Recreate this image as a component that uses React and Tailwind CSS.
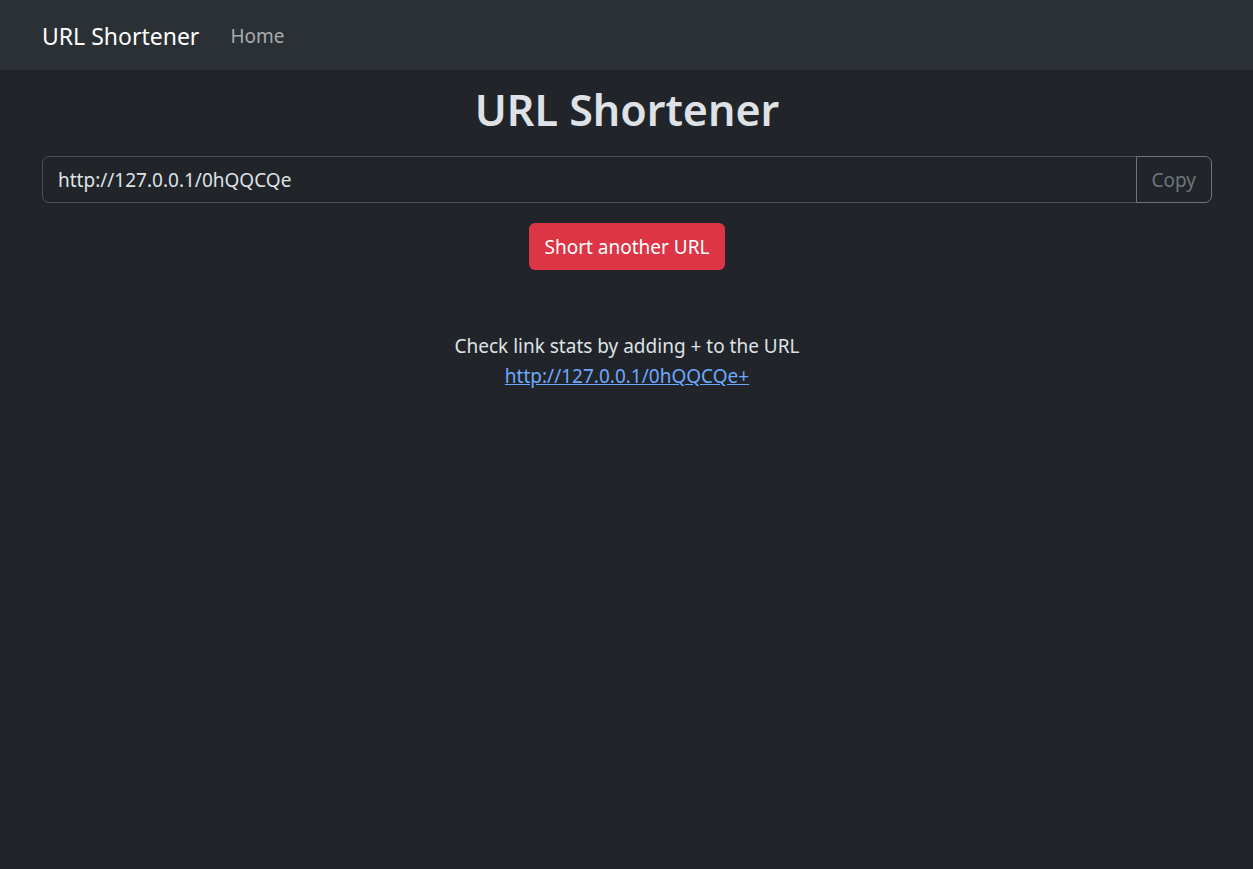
export default function App() {
  const font = { fontFamily: '"Segoe UI", "Noto Sans", "Liberation Sans", sans-serif' };
  return (
    <div className="min-h-[869px] bg-[#212529] text-[#dee2e6]" style={font}>
      <nav className="h-[70px] bg-[#2b3035] flex items-center px-[42px] pt-[1px]">
        <span className="text-[23px] leading-[30px] text-white mr-[31px]">URL Shortener</span>
        <span className="text-[19px] leading-[30px] text-[#a7acb1]">Home</span>
      </nav>
      <div className="pl-[42px] pr-[41px]">
        <h1 className="text-[43px] leading-[48px] font-semibold text-center mt-[16px] mb-[22px]">URL Shortener</h1>
        <div className="flex h-[47px]">
          <div className="flex-1 flex items-center border border-[#495057] rounded-l-[7px] px-[15px] pt-[2px] text-[19px] text-[#dee2e6]">
            http://127.0.0.1/0hQQCQe
          </div>
          <button className="border border-[#6c757d] rounded-r-[7px] px-[15px] pt-[2px] text-[19px] text-[#6c757d] -ml-px">
            Copy
          </button>
        </div>
        <div className="flex justify-center mt-[20px]">
          <button className="bg-[#dc3545] text-white text-[19px] h-[47px] px-[16px] pt-[2px] rounded-[6px]">
            Short another URL
          </button>
        </div>
        <div className="text-center mt-[61px] text-[19px] leading-[30px]">
          <p>Check link stats by adding + to the URL</p>
          <a href="#" className="text-[#6ea8fe] underline">http://127.0.0.1/0hQQCQe+</a>
        </div>
      </div>
    </div>
  );
}
